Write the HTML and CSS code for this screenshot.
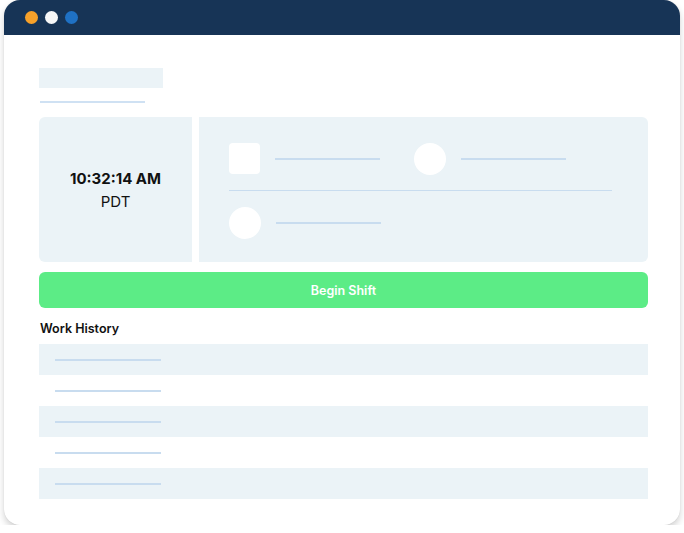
FILE: index.html
```html
<!DOCTYPE html>
<html>
<head>
<meta charset="utf-8">
<link rel="stylesheet" href="styles.css">
</head>
<body>
<div class="window">
  <div class="titlebar">
    <span class="dot dot-orange"></span>
    <span class="dot dot-white"></span>
    <span class="dot dot-blue"></span>
  </div>
  <div class="content">
    <div class="sk-title"></div>
    <div class="sk-sub"></div>
    <div class="cards">
      <div class="clock-card">
        <div class="time">10:32:14 AM</div>
        <div class="zone">PDT</div>
      </div>
      <div class="info-card">
        <div class="info-row">
          <div class="item">
            <span class="sq"></span><span class="line"></span>
          </div>
          <div class="item item-second">
            <span class="circ"></span><span class="line"></span>
          </div>
        </div>
        <div class="divider"></div>
        <div class="info-row">
          <div class="item">
            <span class="circ"></span><span class="line"></span>
          </div>
        </div>
      </div>
    </div>
    <button class="begin">Begin Shift</button>
    <h2 class="section">Work History</h2>
    <div class="history">
      <div class="hrow shaded"><span class="line"></span></div>
      <div class="hrow"><span class="line"></span></div>
      <div class="hrow shaded"><span class="line"></span></div>
      <div class="hrow"><span class="line"></span></div>
      <div class="hrow shaded"><span class="line"></span></div>
    </div>
  </div>
</div>
</body>
</html>
```
FILE: styles.css
```css
* { box-sizing: border-box; }
html, body { margin: 0; padding: 0; background: #ffffff; }
body { font-family: Inter, "Liberation Sans", sans-serif; }

.window {
  margin: 0 4px;
  width: 676px;
  height: 525px;
  background: #ffffff;
  border-radius: 16px;
  overflow: hidden;
  box-shadow: 0 4px 7px rgba(0, 0, 0, 0.18), 0 0 1px rgba(0, 0, 0, 0.14);
}

.titlebar {
  height: 35px;
  background: #173456;
  display: flex;
  align-items: center;
  gap: 7px;
  padding-left: 21px;
  padding-bottom: 1px;
}
.dot { width: 13px; height: 13px; border-radius: 50%; display: block; }
.dot-orange { background: #f7a12a; }
.dot-white { background: #f6f7f8; }
.dot-blue { background: #1f71c4; }

.content {
  padding: 33px 0 0 35px;
  width: 644px;
}

.sk-title {
  width: 124px;
  height: 20px;
  background: #ebf3f7;
}
.sk-sub {
  width: 105px;
  height: 2px;
  margin: 13px 0 0 1px;
  background: #cfe1f3;
}

.cards {
  margin-top: 14px;
  display: grid;
  grid-template-columns: 153px 449px;
  gap: 7px;
  height: 145px;
}
.clock-card {
  background: #ebf3f7;
  border-radius: 6px 0 0 6px;
  display: flex;
  flex-direction: column;
  align-items: center;
  justify-content: center;
  color: #111111;
  font-size: 15px;
  line-height: 23px;
}
.time { font-weight: 700; }
.zone { font-weight: 400; }

.info-card {
  background: #ebf3f7;
  border-radius: 0 6px 6px 0;
  padding: 26px 0 0 30px;
}
.info-row { display: flex; align-items: center; height: 31px; }
.item { display: flex; align-items: center; gap: 15px; }
.item-second { margin-left: 34px; }
.sq {
  width: 31px; height: 31px;
  background: #ffffff;
  border-radius: 4px;
  display: block;
}
.circ {
  width: 32px; height: 32px;
  background: #ffffff;
  border-radius: 50%;
  display: block;
}
.line {
  display: block;
  width: 105px;
  height: 2px;
  background: #c8dcef;
}
.divider {
  width: 383px;
  height: 1px;
  background: #c8dcef;
  margin: 16px 0 16px;
}

.begin {
  display: block;
  margin-top: 10px;
  width: 609px;
  height: 36px;
  border: none;
  border-radius: 6px;
  background: #5cec86;
  color: #ffffff;
  font-family: Inter, "Liberation Sans", sans-serif;
  font-weight: 600;
  font-size: 12.5px;
  padding: 0;
}

.section {
  margin: 12px 0 0 1px;
  font-size: 12.5px;
  font-weight: 600;
  color: #111111;
  line-height: 18px;
  height: 18px;
}

.history { margin-top: 6px; width: 609px; }
.hrow {
  height: 31px;
  display: flex;
  align-items: center;
  padding-left: 16px;
}
.hrow.shaded { background: #ebf3f7; }
.hrow .line { width: 106px; }
```
